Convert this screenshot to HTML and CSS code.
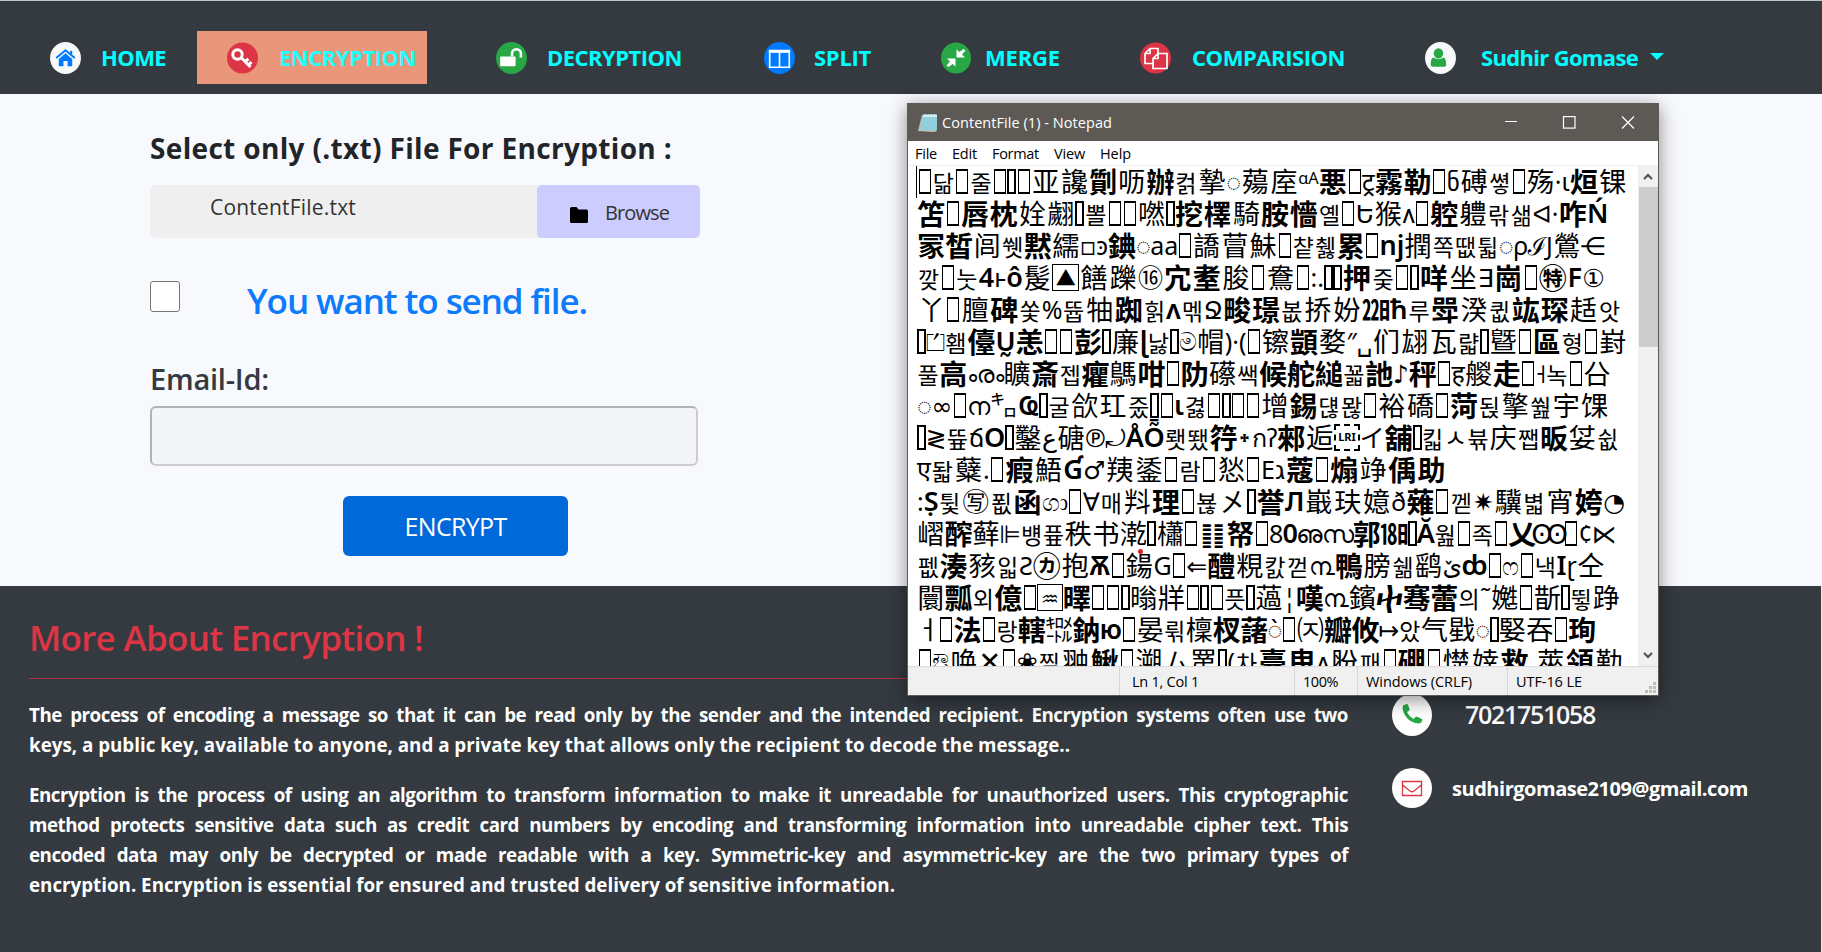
FILE: index.html
```html
<!DOCTYPE html>
<html lang="en">
<head>
<meta charset="utf-8">
<title>Encryption</title>
<link rel="stylesheet" href="styles.css">
</head>
<body>
<nav class="nav">
  <a class="item home"><svg class="ico" viewBox="0 0 30 31"><ellipse cx="15" cy="15.5" rx="15" ry="15.5" fill="#f8f9fa"/><path d="M6 15.5L15 8l9 7.5M20.5 8.500v4" fill="none" stroke="#007bff" stroke-width="2"/><path d="M8.500 16.500l6.500-5.500 6.500 5.500v7h-4.500v-5h-4v5H8.500z" fill="#007bff"/></svg><span data-w="65">HOME</span></a>
  <a class="item enc"><svg class="ico" viewBox="0 0 31 31"><ellipse cx="15.500" cy="15.500" rx="15.500" ry="15.500" fill="#dc3545"/><g fill="none" stroke="#fff" stroke-width="3"><circle cx="10.500" cy="12" r="4.700"/><path d="M14 15l9.500 9.500M18 19l3.500-2.500M21.500 22.500l3-3"/></g></svg><span data-w="137">ENCRYPTION</span></a>
  <a class="item dec"><svg class="ico" viewBox="0 0 30 31"><ellipse cx="15" cy="15.500" rx="15" ry="15.500" fill="#28a745"/><rect x="4" y="14" width="15" height="9.500" rx="1" fill="#fff"/><path d="M15.500 14v-3a4.300 4 0 0 1 8.600 0v4" fill="none" stroke="#fff" stroke-width="2.500"/></svg><span data-w="135">DECRYPTION</span></a>
  <a class="item spl"><svg class="ico" viewBox="0 0 30 31"><ellipse cx="15" cy="15.500" rx="15" ry="15.500" fill="#007bff"/><path d="M5.500 9h19v15.500h-19zM15 9v15" fill="none" stroke="#fff" stroke-width="1.600"/><path d="M4.700 7.500h20.600v3H4.700z" fill="#fff"/></svg><span data-w="57">SPLIT</span></a>
  <a class="item mer"><svg class="ico" viewBox="0 0 30 31"><ellipse cx="15" cy="15.500" rx="15" ry="15.500" fill="#28a745"/><path d="M15.500 7v8h8.500l-3-3 3.500-4-2-1.500-4 3zM14.500 24v-8H6l3 3-3.500 4 2 1.500 4-3z" fill="#fff"/></svg><span data-w="75">MERGE</span></a>
  <a class="item com"><svg class="ico" viewBox="0 0 31 31"><ellipse cx="15.500" cy="15.500" rx="15.500" ry="15.500" fill="#dc3545"/><path d="M13 21H5v-10l5-5h8v5M10 6v5H5M13 16l5-5h9v15H13zM18 11v5h-5" fill="none" stroke="#fff" stroke-width="1.700"/></svg><span data-w="153">COMPARISION</span></a>
  <a class="item usr"><svg class="ico" viewBox="0 0 30 31"><ellipse cx="15" cy="15.500" rx="15" ry="15.500" fill="#f8f9fa"/><ellipse cx="13" cy="11" rx="4.600" ry="5" fill="#28a745"/><path d="M8 15q5 3.500 10 0q2.500 1 2.500 6.500q0 2.500-2.500 2.500H8q-2.500 0-2.500-2.500Q5.500 16 8 15z" fill="#28a745"/></svg><span data-w="157">Sudhir Gomase</span><i class="caret"></i></a>
</nav>

<main class="main">
  <h2 class="title"><span data-w="522">Select only (.txt) File For Encryption :</span></h2>
  <div class="file">
    <div class="fname"><span data-w="146">ContentFile.txt</span></div>
    <div class="browse"><svg width="18" height="16" viewBox="0 0 18 16"><path d="M1.500 0h5l2 2.500h8q1.500 0 1.500 1.500v10.500q0 1.500-1.500 1.500h-15Q0 16 0 14.500v-13Q0 0 1.500 0z"/></svg><span data-w="64">Browse</span></div>
  </div>
  <div class="send"><i class="check"></i><span data-w="340">You want to send file.</span></div>
  <div class="lab"><span data-w="119">Email-Id:</span></div>
  <div class="input"></div>
  <div class="btn"><span data-w="102">ENCRYPT</span></div>
</main>

<footer class="foot">
  <section class="about">
    <h3><span data-w="394">More About Encryption !</span></h3>
    <p><span class="ln">The process of encoding a message so that it can be read only by the sender and the intended recipient. Encryption systems often use two</span><span class="ln end"><span data-w="1041">keys, a public key, available to anyone, and a private key that allows only the recipient to decode the message..</span></span></p>
    <p><span class="ln">Encryption is the process of using an algorithm to transform information to make it unreadable for unauthorized users. This cryptographic</span><span class="ln">method protects sensitive data such as credit card numbers by encoding and transforming information into unreadable cipher text. This</span><span class="ln">encoded data may only be decrypted or made readable with a key. Symmetric-key and asymmetric-key are the two primary types of</span><span class="ln end"><span data-w="866">encryption. Encryption is essential for ensured and trusted delivery of sensitive information.</span></span></p>
  </section>
  <section class="contact">
    <div class="row phone"><svg width="40" height="42" viewBox="0 0 40 42"><ellipse cx="20" cy="21" rx="20" ry="21" fill="#fff"/><path d="M11 11.500l3.500-1.500q1-.2 1.500 1l1.500 4q.3 1-.6 1.700l-1.900 1.300q2 4.700 6.500 7l2-2q.7-.6 1.500-.3l4.500 2q1 .5.700 1.600-.7 3.200-3.700 3.200Q18 29 13.500 22 9.500 16 11 11.500z" fill="#28a745"/></svg><span data-w="130">7021751058</span></div>
    <div class="row mail"><svg width="40" height="40" viewBox="0 0 40 40"><circle cx="20" cy="20" r="20" fill="#fff"/><path d="M10.500 13.500h19v14h-19zM10.500 17l7.500 6q2 1.500 4 0l7.500-6" fill="none" stroke="#dc3545" stroke-width="1.300"/></svg><span data-w="296">sudhirgomase2109@gmail.com</span></div>
  </section>
</footer>

<div class="win">
  <div class="bar">
    <svg width="20" height="21" viewBox="0 0 20 21"><path d="M4 3L0 19l16 1 3-1z" fill="#b9c3bd"/><path d="M5 2h14v16H2.500z" fill="#8fd0dc"/><path d="M5 2h14v3H4.500z" fill="#d5eef2"/><path d="M6 0v3M9 0v3M12 0v3M15 0v3M18 0v3" stroke="#49606a"/></svg>
    <span class="cap" data-w="170">ContentFile (1) - Notepad</span>
    <svg class="ctl" width="130" height="13" viewBox="0 0 130 13" fill="none" stroke="#fff" stroke-width="1.200"><path d="M0 5.500h12M117 .5l12 12M129 .5l-12 12"/><rect x="58.500" y=".6" width="11.500" height="11.500"/></svg>
  </div>
  <div class="menu"><span data-w="22">File</span><span data-w="25">Edit</span><span data-w="47">Format</span><span data-w="31">View</span><span data-w="31">Help</span></div>
  <div class="body">
    <div class="text" id="text"></div>
    <div class="scroll"><svg width="10" height="7" viewBox="0 0 10 7"><path d="M1 6l4-4 4 4" fill="none" stroke="#505050" stroke-width="2"/></svg><i class="thumb"></i><svg width="10" height="7" viewBox="0 0 10 7"><path d="M1 1l4 4 4-4" fill="none" stroke="#505050" stroke-width="2"/></svg></div>
  </div>
  <div class="status"><div class="s1"></div><div class="s2"><span data-w="67">Ln 1, Col 1</span></div><div class="s3"><span data-w="35">100%</span></div><div class="s4"><span data-w="106">Windows (CRLF)</span></div><div class="s5"><span data-w="66">UTF-16 LE</span></div>
    <svg class="grip" width="11" height="11" viewBox="0 0 11 11" fill="#bdbdbd"><path d="M8 0h3v3H8zM8 4h3v3H8zM4 4h3v3H4zM8 8h3v3H8zM4 8h3v3H4zM0 8h3v3H0z"/></svg></div>
  <i class="dot"></i>
</div>
<script src="script.js"></script>
</body>
</html>
```
FILE: styles.css
```css
* { box-sizing: border-box; }
body { margin: 0; width: 1822px; height: 952px; overflow: hidden; background: #f8f9fc; font-family: "Open Sans", "Noto Sans", sans-serif; color: #212529; display: flex; flex-direction: column; }
[data-w] { white-space: nowrap; display: inline-block; }
.nav { height: 94px; flex: none; background: #343a40; border-top: 1px solid #b9c9c9; display: flex; align-items: flex-start; padding-top: 30px; }
.item { height: 53px; display: flex; align-items: center; color: #0ff; font-weight: 700; font-size: 22px; flex: none; }
.item span { margin-top: -1px; }
.ico { width: 31px; height: 32px; margin-right: 20px; flex: none; }
.home { padding-left: 50px; width: 197px; }
.enc { background: #e9967a; width: 230px; padding-left: 30px; color: #2ff; }
.enc .ico { margin-right: 21px; }
.dec { padding-left: 69px; width: 336px; }
.spl { width: 177px; padding-left: 1px; }
.spl .ico { margin-right: 19px; }
.mer { width: 200px; padding-left: 1px; }
.mer .ico { margin-right: 14px; width: 30px; }
.com { width: 287px; }
.com .ico { margin-right: 21px; }
.usr .ico { margin-right: 25px; }
.usr { margin-left: -2px; }
.caret { margin-left: 12px; border: 7px solid transparent; border-top: 7px solid #0ff; border-bottom: 0; margin-top: -3px; }
.main { height: 492px; flex: none; padding: 32px 0 0 150px; }
.title { margin: 0; height: 44px; line-height: 44px; font-size: 28px; font-weight: 700; }
.file { margin-top: 15px; width: 550px; height: 53px; display: flex; background: #efefef; border-radius: 5px; font-size: 20px; color: #333; }
.fname { width: 387px; padding: 5px 0 0 60px; line-height: 34px; font-size: 21px; }
.browse { width: 163px; background: #ccf; border-radius: 5px; padding: 2px 0 0 33px; display: flex; align-items: center; gap: 17px; font-size: 20px; }
.browse svg { margin-top: 5px; }
.send { margin-top: 32px; height: 60px; display: flex; align-items: center; font-size: 35px; font-weight: 600; color: #0d7bfb; }
.check { width: 30px; height: 31px; margin: 0 67px 8px 0; border: 1px solid #767676; border-radius: 3px; background: #fff; }
.lab { margin-top: 27px; height: 44px; line-height: 44px; font-size: 29px; font-weight: 600; color: #343a40; }
.input { margin-top: 5px; width: 548px; height: 60px; border: 2px solid #ccc; border-top-color: #b0b2b5; border-left-color: #b0b2b5; border-radius: 6px; background: #f4f5f7; }
.btn { margin: 30px 0 0 193px; width: 225px; height: 60px; border-radius: 6px; background: #0069d9; color: #fff; display: flex; align-items: center; justify-content: center; font-size: 25px; }
.foot { height: 366px; background: #343a40; color: #fff; display: flex; border-right: 1px solid #eee; }
.about { width: 1319px; margin-left: 29px; }
.about h3 { margin: 28px 0 21px; height: 65px; line-height: 48px; color: #dc3545; font-size: 35px; font-weight: 600; border-bottom: 1px solid #b03240; }
.about p { margin: 0 0 20px; font-size: 18.8px; font-weight: 700; line-height: 30px; letter-spacing: -.5px; }
.ln { display: block; white-space: nowrap; text-align: justify; text-align-last: justify; }
.end { text-align-last: left; }
.contact { margin-left: 44px; padding-top: 108px; }
.row { display: flex; align-items: center; }
.phone { height: 42px; font-size: 25px; font-weight: 600; gap: 33px; }
.phone span { margin-top: -2px; }
.mail { margin-top: 32px; height: 40px; font-size: 20px; font-weight: 700; gap: 20px; }
.win { position: absolute; left: 907px; top: 103px; width: 752px; height: 593px; border: 1px solid #5d5a58; border-top: 0; background: #fff; display: flex; flex-direction: column; box-shadow: 0 4px 18px rgba(0,0,0,.45); }
.bar { height: 38px; flex: none; background: #5d5a56; color: #fff; display: flex; align-items: center; padding-left: 10px; font-size: 14.5px; }
.cap { margin-left: 4px; }
.ctl { margin-left: auto; margin-right: 23px; }
.menu { height: 25px; flex: none; display: flex; align-items: center; gap: 15px; padding-left: 7px; font-size: 14.5px; color: #000; border-bottom: 1px solid #f0f0f0; }
.body { height: 500px; flex: none; display: flex; overflow: hidden; }
.text { width: 730px; height: 500px; overflow: hidden; padding: 0 0 0 9px; color: #000; font: 27px/32px "Noto Sans CJK SC", "DejaVu Sans", sans-serif; position: relative; }
.text::before { content: ""; position: absolute; left: 8px; top: 0; width: 1px; height: 32px; background: #000; }
.line { height: 32px; display: flex; justify-content: space-between; align-items: center; }
.g { flex: 0 1 auto; min-width: 0; white-space: nowrap; display: flex; justify-content: center; padding-bottom: 2px; }
.c { width: 29px; font-size: 27px; font-weight: 400; }
.c.b { font-size: 28px; }
.k { width: 23px; font-size: 23px; font-weight: 400; padding: 0; font-family: "Noto Sans CJK KR", sans-serif; }
.o { font-size: 25px; font-family: "Noto Sans", "DejaVu Sans", "Noto Sans CJK SC", sans-serif; }
.o.b { font-size: 27px; font-weight: 600; }
.b { font-weight: 700; }
.w::before, .n::before { content: ""; width: 10px; height: 21px; border: 1px solid #000; border-width: 2px 1px; }
.w { width: 15px; flex-shrink: 0; }
.n { width: 9px; flex-shrink: 0; }
.n::before { width: 7px; border-width: 2px; }
.f span { border: 1px solid #000; width: 27px; height: 27px; line-height: 25px; text-align: center; font-size: 20px; }
.f.dash span { border: 2px dashed #000; font: 700 11px/22px "Noto Sans", sans-serif; }
.scroll { width: 20px; background: #f0f0f0; display: flex; flex-direction: column; align-items: center; padding: 7px 0; }
.thumb { width: 19px; height: 160px; margin: 7px 0 auto; background: #cdcdcd; }
.status { height: 29px; flex: none; background: #f0f0f0; border-top: 1px solid #d9d9d9; display: flex; font-size: 14.5px; color: #000; position: relative; }
.status div { border-right: 1px solid #d7d7d7; display: flex; align-items: center; }
.s1 { width: 212px; }
.s2 { width: 175px; padding-left: 12px; }
.s3 { width: 63px; padding-left: 8px; }
.s4 { width: 150px; padding-left: 8px; }
.s5 { padding-left: 8px; }
.status .s5 { border: 0; }
.grip { position: absolute; right: 2px; bottom: 2px; }
.dot { position: absolute; left: 230px; top: 446px; width: 5px; height: 5px; border-radius: 50%; background: #d8232a; }
```
FILE: script.js
```js
// Each line: [width in px, space-separated glyphs]. "*" = bold, "_" = missing glyph, "|" = narrow missing glyph, "#" = boxed symbol.
const lines = [
  [710, "_ 닮 _ 줄 _ | _ 亚 讒 *劕 呖 *辦 컭 摯 ◌ 薚 庢 ᵅᴬ *悪 _ ट्र *霧 *勒 _ ნ 磗 쎻 _ 殇 ·ɩ *烜 锞"],
  [691, "*笘 _ *唇 *枕 姾 翽 | 뽈 _ _ 嘫 | *挖 *檡 騎 *胺 *懎 옐 _ Ե 猴 ᴧ _ *躻 軆 띾 샒 ᐊ· *咋 *Ń"],
  [688, "*冡 *皙 闾 쒯 *黙 繻 ▫ ͽ *錪 ◌ aa _ 譑 萺 鮇 _ 챹 췛 *累 _ *nj 撋 쪽 땞 튋 ◌ ρ ℐ J 鶯 ⋲"],
  [688, "깢 _ 눗 *4 ⱶ *ô 髲 #▲ 饍 躒 ⑯ *宂 *耊 朘 _ 鴦 _ :. | | *押 줒 _ | *咩 坐 ∃ *崗 _ *㊕ *F ①"],
  [704, "丫 _ 膻 *碑 쏯 % 뜝 牰 *踟 힑 *ʌ 멖 Ջ *畯 *璟 봆 挢 妢 *㏵ *ћ 루 *斝 湀 큆 *竑 *琛 趏 앗"],
  [710, "| ⏍ 횀 *儓 *Ṵ *恙 _ _ *彭 | 廉 *ɭ 낧 | ම 帽 )·( _ 镲 *顗 婺 ″ ␣ 们 翃 瓦 랿 | 曁 _ *區 형 _ 崶"],
  [694, "풀 *高 ൟ 矌 *斎 젭 *癯 鷌 *咁 _ *阞 礤 쌕 *候 *舵 *縋 꾧 *訑 ♪ *秤 _ ह 艐 *走 _ ˧ 녹 _ 㕣"],
  [692, "◌ ∞ _ ന ㌔ *Ҩ | 굴 欱 玒 줐 | _ *ι 겷 _ | _ _ 增 *錫 댾 뫊 _ 裕 礄 _ *菏 됝 擎 쒎 宇 馃"],
  [702, "| ≷ 뜦 ճ *O | 鑿 ع 磄 ℗ ⤾ *Å *Ȭ 뢧 뙜 *筕 ᛭ ก ʔ *郲 逅 #LRI イ *舖 | 킯 ㅅ 뷲 庆 쨉 *昄 姇 쉾"],
  [529, "ए 돫 糵 . _ *瘕 鯃 *Ɠ ♂ 羠 鋈 _ 람 _ 悐 _ E ג *蔻 _ *煽 竫 *偊 *助"],
  [708, ": *Ṣ 튗 ㊢ 푒 *函 ගා _ ∀ 매 㪵 *理 _ 뵪 㐅 | *誉 *Л 嶯 玞 嬑 ð *薙 _ 껟 ✷ 驥 볇 宵 *姱 ◔"],
  [699, "嶍 *醡 藓 ⊫ 뱽 픂 秩 书 漧 | 櫹 _ ䷁ *帑 _ 8 *0 ഌസ *郭 *㏱ | *Ă 웚 _ 족 _ *乂 Ꙭ _ ¢ ⋉"],
  [688, "펪 *湊 豥 읿 Ƨ *㋕ 抱 *Ѫ _ 鍚 G _ ⇐ *醴 粯 캀 껃 ൩ *鴨 膀 쉚 鹞 ێ *ȸ _ ෆ _ 낵 *I ɽ 仝"],
  [703, "闤 *瓢 외 *億 _ #♒ *曎 _ _ | 暡 牂 _ | _ 픗 | 薖 ¦ *嘆 ൩ 鑌 *ⴕ *骞 *蕾 의 ˜ 嬔 _ 斮 | 뜋 踭"],
  [679, "ㅓ _ *法 _ 랑 *轄 ㌖ *鈉 *ю _ 晏 뤾 檁 *杈 *藷 ◌̀ _ ㈈ *瓣 *攸 ↦ 았 气 戥 ◌ | 婜 吞 _ *珣"],
  [707, "_ ಔ 唤 *✕ _ ❀ 찔 翀 *鰍 _ 溯 ム 罤 | ( 차 *臺 *曳 ʌ 肦 패 _ *硼 _ 憷 婞 *救 . 萊 *領 勤"]
];

const text = document.getElementById("text");
for (const [width, glyphs] of lines) {
  const row = document.createElement("div");
  row.className = "line";
  row.style.width = width + "px";
  for (const token of glyphs.split(" ")) {
    const el = document.createElement("div");
    el.className = "g";
    if (token === "_") el.classList.add("w");
    else if (token === "|") el.classList.add("n");
    else if (token[0] === "#") {
      el.classList.add("f");
      if (token.length > 2) el.classList.add("dash");
      const box = document.createElement("span");
      box.textContent = token.slice(1);
      el.append(box);
    } else {
      const bold = token[0] === "*";
      const ch = bold ? token.slice(1) : token;
      if (bold) el.classList.add("b");
      const code = ch.codePointAt(0);
      if (code >= 0xac00 && code <= 0xd7a3) el.classList.add("k");
      else if (code >= 0x3200 && code <= 0xfaff) el.classList.add("c");
      else el.classList.add("o");
      el.textContent = ch;
    }
    row.append(el);
  }
  text.append(row);
}

// Track each label so that it fills its given width.
for (const el of document.querySelectorAll("[data-w]")) {
  el.style.letterSpacing = "0px";
  const natural = el.getBoundingClientRect().width;
  el.style.letterSpacing = (el.dataset.w - natural) / el.textContent.length + "px";
}
```
